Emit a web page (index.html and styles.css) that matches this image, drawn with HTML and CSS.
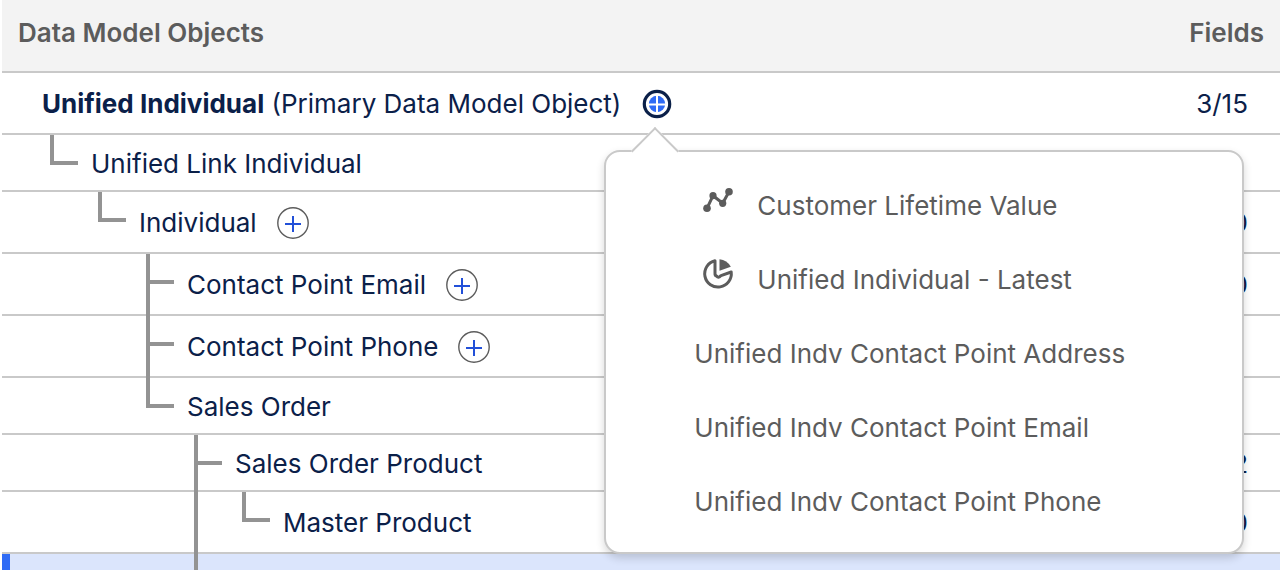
FILE: index.html
```html
<!DOCTYPE html>
<html lang="en">
<head>
    <meta charset="UTF-8">
    <meta name="viewport" content="width=device-width, initial-scale=1.0">
    <title>Data Model Objects</title>
    <link rel="stylesheet" href="styles.css">
</head>
<body>

    <table class="objects">
        <thead>
            <tr>
                <th scope="col">Data Model Objects</th>
                <th scope="col" class="fields">Fields</th>
            </tr>
        </thead>
        <tbody>
            <tr>
                <td>
                    <div class="node root tall">
                        <span class="label"><strong>Unified Individual</strong> (Primary Data Model Object)</span>
                        <div class="anchor">
                            <button class="add-btn active" aria-label="Add related object" aria-expanded="true">
                                <svg viewBox="0 0 32 32"><circle cx="16" cy="16" r="12.7" fill="#fff" stroke="#0b2049" stroke-width="3.2"/><circle cx="16" cy="16" r="8.2" fill="#2f6bf5"/><path d="M16 7v18M7 16.5h18" stroke="#fff" stroke-width="2"/></svg>
                            </button>
                            <!-- related objects menu -->
                            <div class="popover">
                                <button class="menu-item with-icon">
                                    <svg class="icon" viewBox="0 0 32 32"><path d="M5 24.3L11 11.7L20.7 19.3L27 7.7" fill="none" stroke="#5c5c5c" stroke-width="3"/><g fill="#5c5c5c"><circle cx="5" cy="24.3" r="3.8"/><circle cx="11" cy="11.7" r="3.6"/><circle cx="20.7" cy="19.3" r="3.6"/><circle cx="27" cy="7.7" r="3.8"/></g></svg>
                                    Customer Lifetime Value
                                </button>
                                <button class="menu-item with-icon">
                                    <svg class="icon" viewBox="0 0 32 32"><path d="M13 2.8A13.3 13.3 0 1 0 29.2 14L19 17.6Q16.5 20.5 14.5 18Q12.8 17.5 13 15Z" fill="none" stroke="#5c5c5c" stroke-width="3" stroke-linejoin="round"/><path d="M17.5 1.3Q25 2 28.8 8.8L17.5 12.8Z" fill="#5c5c5c"/></svg>
                                    Unified Individual - Latest
                                </button>
                                <button class="menu-item">Unified Indv Contact Point Address</button>
                                <button class="menu-item">Unified Indv Contact Point Email</button>
                                <button class="menu-item">Unified Indv Contact Point Phone</button>
                            </div>
                        </div>
                    </div>
                </td>
                <td class="fields">3/15</td>
            </tr>
            <tr>
                <td>
                    <div class="node">
                        <span class="elbow"></span>
                        <span class="label">Unified Link Individual</span>
                    </div>
                </td>
                <td class="fields"></td>
            </tr>
            <tr>
                <td>
                    <div class="node tall">
                        <span class="space"></span>
                        <span class="elbow"></span>
                        <span class="label">Individual</span>
                        <button class="add-btn" aria-label="Add to Individual">
                            <svg viewBox="0 0 32 32"><circle cx="16" cy="16" r="15.2" fill="#fff" stroke="#5c5c5c" stroke-width="1.4"/><path d="M16 9v16M8 17h16" stroke="#2250d8" stroke-width="2"/></svg>
                        </button>
                    </div>
                </td>
                <td class="fields">0</td>
            </tr>
            <tr>
                <td>
                    <div class="node tall">
                        <span class="space"></span>
                        <span class="space"></span>
                        <span class="tee"></span>
                        <span class="label">Contact Point Email</span>
                        <button class="add-btn" aria-label="Add to Contact Point Email">
                            <svg viewBox="0 0 32 32"><circle cx="16" cy="16" r="15.2" fill="#fff" stroke="#5c5c5c" stroke-width="1.4"/><path d="M16 9v16M8 17h16" stroke="#2250d8" stroke-width="2"/></svg>
                        </button>
                    </div>
                </td>
                <td class="fields">0</td>
            </tr>
            <tr>
                <td>
                    <div class="node tall">
                        <span class="space"></span>
                        <span class="space"></span>
                        <span class="tee"></span>
                        <span class="label">Contact Point Phone</span>
                        <button class="add-btn" aria-label="Add to Contact Point Phone">
                            <svg viewBox="0 0 32 32"><circle cx="16" cy="16" r="15.2" fill="#fff" stroke="#5c5c5c" stroke-width="1.4"/><path d="M16 9v16M8 17h16" stroke="#2250d8" stroke-width="2"/></svg>
                        </button>
                    </div>
                </td>
                <td class="fields"></td>
            </tr>
            <tr>
                <td>
                    <div class="node">
                        <span class="space"></span>
                        <span class="space"></span>
                        <span class="elbow"></span>
                        <span class="label">Sales Order</span>
                    </div>
                </td>
                <td class="fields"></td>
            </tr>
            <tr>
                <td>
                    <div class="node">
                        <span class="space"></span>
                        <span class="space"></span>
                        <span class="space"></span>
                        <span class="tee"></span>
                        <span class="label">Sales Order Product</span>
                    </div>
                </td>
                <td class="fields">2</td>
            </tr>
            <tr>
                <td>
                    <div class="node tall">
                        <span class="space"></span>
                        <span class="space"></span>
                        <span class="space"></span>
                        <span class="space line"></span>
                        <span class="elbow"></span>
                        <span class="label">Master Product</span>
                    </div>
                </td>
                <td class="fields">0</td>
            </tr>
            <tr class="selected">
                <td>
                    <div class="node tall">
                        <span class="space"></span>
                        <span class="space"></span>
                        <span class="space"></span>
                        <span class="tee"></span>
                    </div>
                </td>
                <td class="fields"></td>
            </tr>
        </tbody>
    </table>

</body>
</html>
```
FILE: styles.css
```css
:root {
    --text-color: #0b2049;
    --muted-color: #5c5c5c;
    --border-color: #c9c9c9;
    --tree-color: #939393;
    --select-color: #2f6bf5;
}

* {
    box-sizing: border-box;
}

body {
    font-family: Inter, 'Liberation Sans', sans-serif;
    font-size: 26px;
    line-height: 32px;
    margin: 0;
    padding-left: 2px;
    height: 100vh;
    overflow: hidden;
    background-color: #fff;
    color: var(--text-color);
}

.objects {
    width: 100%;
    border-collapse: separate;
    border-spacing: 0;
}

th, td {
    padding: 0;
    text-align: left;
    border-bottom: 2px solid var(--border-color);
}

th {
    padding: 17px 16px 22px;
    background-color: #f3f3f3;
    color: var(--muted-color);
    font-weight: 600;
}

th.fields, td.fields {
    text-align: right;
}

td.fields {
    padding-top: 2px;
    padding-right: 32px;
}

/* tree */
.node {
    display: flex;
    height: 55px;
    padding-left: 48px;
}

.node.tall {
    height: 60px;
}

.node.root {
    padding-left: 40px;
}

.label {
    align-self: center;
    margin-top: 2px;
    white-space: nowrap;
}

.label strong {
    font-weight: 700;
}

.space {
    flex: 0 0 48px;
}

.line, .tee {
    margin-bottom: -2px;
    border-left: 4px solid var(--tree-color);
}

.elbow, .tee {
    flex: 0 0 28px;
    margin-right: 13px;
}

.elbow {
    height: 30px;
    border-left: 4px solid var(--tree-color);
    border-bottom: 4px solid var(--tree-color);
}

.tee::before {
    content: "";
    display: block;
    height: 26px;
    border-bottom: 4px solid var(--tree-color);
}

.selected td {
    background-color: #dbe5fc;
}

.selected .node {
    padding-left: 40px;
    border-left: 8px solid var(--select-color);
}

.anchor {
    position: relative;
    align-self: center;
    display: flex;
}

/* buttons */
button {
    font: inherit;
    color: inherit;
    border: none;
    background: none;
    padding: 0;
    cursor: pointer;
}

.add-btn {
    align-self: center;
    width: 32px;
    height: 32px;
    margin-top: 2px;
    margin-left: 20px;
}

.add-btn svg {
    display: block;
}

/* popover */
.popover {
    position: absolute;
    z-index: 1;
    top: 64px;
    left: -17px;
    width: 640px;
    padding: 17px 0 13px;
    background-color: #fff;
    border: 2px solid var(--border-color);
    border-radius: 16px;
    box-shadow: 0 4px 8px rgba(0, 0, 0, 0.16);
}

.popover::before {
    content: "";
    position: absolute;
    top: -18px;
    left: 32px;
    width: 32px;
    height: 32px;
    background-color: #fff;
    border-top: 2px solid var(--border-color);
    border-left: 2px solid var(--border-color);
    transform: rotate(45deg);
}

.menu-item {
    display: flex;
    align-items: center;
    width: 100%;
    height: 74px;
    padding-left: 88px;
    color: var(--muted-color);
    white-space: nowrap;
}

.with-icon {
    padding-left: 96px;
}

.icon {
    width: 32px;
    height: 32px;
    margin: 0 23px 12px 0;
}
```
